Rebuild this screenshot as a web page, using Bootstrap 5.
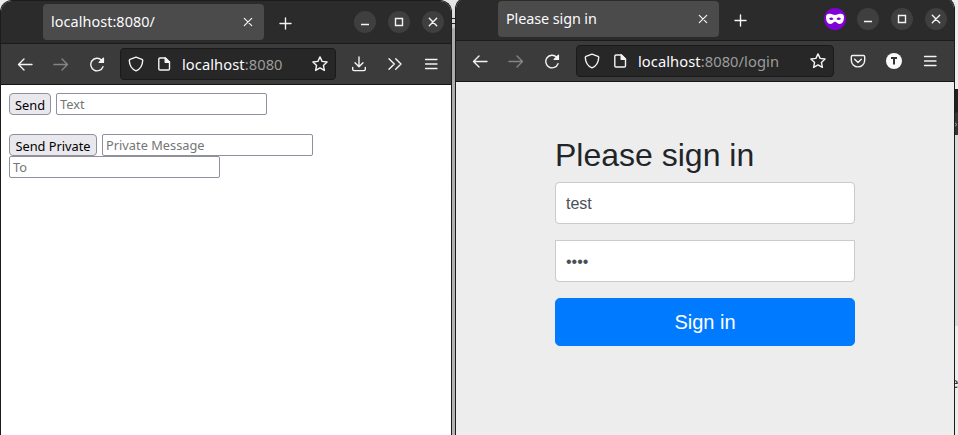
<!DOCTYPE html>
<html lang="en">
<head>
<meta charset="utf-8">
<meta name="viewport" content="width=device-width, initial-scale=1">
<title>Please sign in</title>
<link href="https://cdn.jsdelivr.net/npm/bootstrap@5.3.0/dist/css/bootstrap.min.css" rel="stylesheet">
<style>
body{width:958px;height:435px;overflow:hidden;background:#ededed;font-family:"Noto Sans","Open Sans",sans-serif}
.desktop{width:958px;height:435px}
.gutter{left:440px;top:0;width:25px;height:435px;background:linear-gradient(#e8e8e8 0,#d2d2d2 27px,#ababab 29px,#b4b4b4 100%)}
.peek{left:950px;width:8px}
.peek-a{top:89px;height:46px;background:linear-gradient(#202020 0 23px,#333 24px)}
.peek-b{top:135px;height:191px;background:#d8d8d8}
.peek-ch{left:950px;top:373px;font-size:15px;line-height:18px;color:#333}
.peek-x{left:954px;top:121px}
.gutter-mark{left:452px;top:18px;width:3px;height:6px;border-top:1px solid #222;border-bottom:1px solid #222}
.win{border:1px solid #1c1c1c;border-bottom:0;border-radius:12px 12px 0 0;overflow:hidden}
.win-a{left:0;top:0;width:452px;height:435px}
.win-b{left:455px;top:-3px;width:500px;height:438px}
.tabs-bar{height:43px;background:#2b2b2b;border-bottom:1px solid #1b1b1b;padding:0 7px 0 42px;color:#fbfbfe}
.tab-item{width:221px;height:36px;margin-bottom:1px;padding:0 11px 0 8px;background:#4b4b4b;border-radius:4px;font-size:14.4px}
.tab-text{letter-spacing:-.09px}
.tab-long{letter-spacing:.07px}
.tabs-bar svg,.tool-bar svg{display:block;fill:none;stroke:#f4f4f4;stroke-width:1.4;stroke-linecap:round;stroke-linejoin:round}
.tabs-bar .tab-item svg{stroke-width:1.2;margin-top:1px}
.tabs-bar .new-tab{margin-left:15px;margin-top:2px}
.ctl{width:22px;height:22px;border-radius:50%;background:#3f3f3f}
.ctl-gap{gap:12px}
.ctl.mask{background:#8000d7;margin-right:-1px}
.tool-bar{height:41px;background:#3b3b3b;border-bottom:1px solid #151515;padding-left:6px}
.tool{width:36px;height:36px}
.tool.off svg{stroke:#858585}
.url{height:32px;background:#272727;border:1px solid #1a1a1a;border-radius:4px;padding:0 7px;color:#fbfbfe;font-size:14.7px}
.url-a{margin:0 5px}
.url-b{margin:0 6px}
.tool-bar .url-doc{margin-left:12px;margin-right:10px}
.last-a{margin-right:2px}
.last-b{margin-right:6px}
.url-text{letter-spacing:.07px;margin-top:1px}
.url-text span{color:#9c9c9c}
.page-a{height:350px;background:#fff;padding:8px;font-size:13.3px;color:#000}
.page-a button{height:22px;padding:1px 0 0;border:1px solid #8f8f9d;border-radius:4px;background:#e9e9ed;font-size:12.8px;line-height:18px;color:#000}
.page-a input{width:211px;height:22px;padding:0 3px;border:1px solid #8f8f9d;border-radius:2px;font-size:12.8px;color:#000;display:block}
.page-a input::placeholder{color:#757575;opacity:1}
.row-gap{gap:5px}
.second-row{margin-top:19px}
.b-send{width:42px}.b-priv{width:88px}
.page-b{height:354px;background:#ededed;font-family:"Liberation Sans",Arial,sans-serif;padding-top:54px}
.signin{width:300px}
.signin h2{font-size:32px;line-height:38.4px;color:#212529;margin-bottom:8px;font-weight:500}
.signin .form-control{height:42px;padding:11px 10px 9px;border:1px solid #c8cacc;font-size:16px;line-height:20px;color:#495057;border-radius:4px;margin-bottom:16px}
.signin .pw{border-radius:0 0 4px 4px}
.signin .btn{height:48px;font-size:20px;line-height:30px;background:#007bff;border-color:#007bff;border-radius:4.8px;padding:8px 16px}
</style>
</head>
<body>
<svg class="d-none" aria-hidden="true">
<symbol id="back" viewBox="0 0 16 16"><path d="M15 8.500H1.500M7 3 1.500 8.500 7 14"/></symbol>
<symbol id="fwd" viewBox="0 0 16 16"><path d="M1 8.500h13.500M9 3l5.500 5.500L9 14"/></symbol>
<symbol id="reload" viewBox="0 0 16 16"><path d="M14 10.700A6.300 6.300 0 1 1 12.500 4L14 5.500"/><path d="M14.400 2.200v4.200h-4.200z" fill="#f4f4f4"/></symbol>
<symbol id="shield" viewBox="0 0 16 16"><path d="M8 1.100 14 3.400c.5.200.8.600.7 1.100-.2 5-2.400 8.600-6.700 10.400C3.700 13.100 1.500 9.500 1.300 4.500c0-.5.2-.9.7-1.100z"/></symbol>
<symbol id="doc" viewBox="0 0 16 16"><path d="M4 2h5.500l4 4v6.800c0 .8-.4 1.200-1.200 1.200H4c-.8 0-1.200-.4-1.200-1.200V3.200C2.800 2.400 3.200 2 4 2z"/><path d="M9.200 2v4.200h4.300z" fill="#f4f4f4"/></symbol>
<symbol id="star" viewBox="0 0 16 16"><path d="m8 .9 2.100 4.500 5 .6-3.700 3.400 1 5L8 11.900l-4.400 2.500 1-5L.9 6l5-.6z"/></symbol>
<symbol id="down" viewBox="0 0 16 16"><path d="M8 1v9.500M4 6.700l4 4 4-4M1.700 11.500v1.700c0 .9.500 1.400 1.400 1.400h9.800c.9 0 1.400-.5 1.400-1.400v-1.700"/></symbol>
<symbol id="more" viewBox="0 0 16 16"><path d="m2 2.700 5.300 5.300L2 13.300M8.700 2.700 14 8l-5.300 5.300"/></symbol>
<symbol id="menu" viewBox="0 0 16 16"><path d="M2.500 3.500h11.500M2.500 8h11.500M2.500 12.500h11.500" stroke-width="1.300"/></symbol>
<symbol id="pocket" viewBox="0 0 16 16"><path d="M2.600 2.500h10.800c.8 0 1.300.5 1.300 1.300v3.400a6.700 6.700 0 0 1-13.400 0V3.800c0-.8.500-1.300 1.300-1.300zM4.700 6.300 8 9.500l3.300-3.200"/></symbol>
<symbol id="cross" viewBox="0 0 10 10"><path d="m1.300 1.300 7.400 7.400M8.700 1.300 1.300 8.700"/></symbol>
<symbol id="plus" viewBox="0 0 13 13"><path d="M6.500 1v11M1 6.500h11"/></symbol>
<symbol id="min" viewBox="0 0 10 10"><path d="M1 7.500h8" stroke-linecap="butt"/></symbol>
<symbol id="max" viewBox="0 0 10 10"><path d="M1.500 1.500h7v7h-7z" stroke-linejoin="miter"/></symbol>
</svg>
<main class="desktop position-relative overflow-hidden">
<div class="gutter position-absolute"></div>
<div class="gutter-mark position-absolute"></div>
<div class="peek peek-a position-absolute"></div>
<svg class="peek-x position-absolute" width="4" height="7" viewBox="0 0 4 7"><path d="m0 1 3 2.500L0 6" fill="none" stroke="#999"/></svg>
<div class="peek peek-b position-absolute"></div>
<span class="peek-ch position-absolute">e</span>
<section class="win win-a position-absolute">
<div class="tabs-bar d-flex align-items-center">
<div class="tab-item d-flex align-items-center justify-content-between"><span class="tab-text tab-long">localhost:8080/</span><svg width="10" height="10"><use href="#cross"/></svg></div>
<svg class="new-tab" width="13" height="13"><use href="#plus"/></svg>
<div class="d-flex ctl-gap ms-auto">
<span class="ctl d-flex align-items-center justify-content-center"><svg width="10" height="10"><use href="#min"/></svg></span>
<span class="ctl d-flex align-items-center justify-content-center"><svg width="10" height="10"><use href="#max"/></svg></span>
<span class="ctl d-flex align-items-center justify-content-center"><svg width="10" height="10"><use href="#cross"/></svg></span>
</div>
</div>
<div class="tool-bar d-flex align-items-center">
<span class="tool d-flex align-items-center justify-content-center"><svg width="16" height="16"><use href="#back"/></svg></span>
<span class="tool off d-flex align-items-center justify-content-center"><svg width="16" height="16"><use href="#fwd"/></svg></span>
<span class="tool d-flex align-items-center justify-content-center"><svg width="16" height="16"><use href="#reload"/></svg></span>
<div class="url url-a d-flex align-items-center flex-grow-1"><svg width="16" height="16"><use href="#shield"/></svg><svg class="url-doc" width="16" height="16"><use href="#doc"/></svg><span class="url-text">localhost<span>:8080</span></span><svg class="ms-auto" width="16" height="16"><use href="#star"/></svg></div>
<span class="tool d-flex align-items-center justify-content-center"><svg width="16" height="16"><use href="#down"/></svg></span>
<span class="tool d-flex align-items-center justify-content-center"><svg width="16" height="16"><use href="#more"/></svg></span>
<span class="tool last-a d-flex align-items-center justify-content-center"><svg width="16" height="16"><use href="#menu"/></svg></span>
</div>
<div class="page-a">
<div class="d-flex row-gap mb-3"><button class="b-send">Send</button><input placeholder="Text"></div>
<div class="d-flex row-gap second-row"><button class="b-priv">Send Private</button><input placeholder="Private Message"></div>
<input placeholder="To">
</div>
</section>
<section class="win win-b position-absolute">
<div class="tabs-bar d-flex align-items-center">
<div class="tab-item d-flex align-items-center justify-content-between"><span class="tab-text">Please sign in</span><svg width="10" height="10"><use href="#cross"/></svg></div>
<svg class="new-tab" width="13" height="13"><use href="#plus"/></svg>
<div class="d-flex ctl-gap ms-auto">
<span class="ctl mask d-flex align-items-center justify-content-center"><svg width="18" height="12" viewBox="0 0 18 12"><path fill="#fff" stroke="none" fill-rule="evenodd" d="M0 4C0 1 2 .6 4 .8c2 .1 3.500 1.200 5 1.200S12 .9 14 .8c2-.2 4 .2 4 3.200 0 4-1.500 7-4.500 7C11 11 10.500 8.800 9 8.800S7 11 4.500 11C1.500 11 0 8 0 4zm3 1.700c1.300 1.600 3.200 1.600 4.600.3C6.500 4 4.300 3.900 3 5.700zm12 0c-1.300-1.800-3.500-1.700-4.600.3 1.400 1.300 3.300 1.300 4.600-.3z"/></svg></span>
<span class="ctl d-flex align-items-center justify-content-center"><svg width="10" height="10"><use href="#min"/></svg></span>
<span class="ctl d-flex align-items-center justify-content-center"><svg width="10" height="10"><use href="#max"/></svg></span>
<span class="ctl d-flex align-items-center justify-content-center"><svg width="10" height="10"><use href="#cross"/></svg></span>
</div>
</div>
<div class="tool-bar d-flex align-items-center">
<span class="tool d-flex align-items-center justify-content-center"><svg width="16" height="16"><use href="#back"/></svg></span>
<span class="tool off d-flex align-items-center justify-content-center"><svg width="16" height="16"><use href="#fwd"/></svg></span>
<span class="tool d-flex align-items-center justify-content-center"><svg width="16" height="16"><use href="#reload"/></svg></span>
<div class="url url-b d-flex align-items-center flex-grow-1"><svg width="16" height="16"><use href="#shield"/></svg><svg class="url-doc" width="16" height="16"><use href="#doc"/></svg><span class="url-text">localhost<span>:8080/login</span></span><svg class="ms-auto" width="16" height="16"><use href="#star"/></svg></div>
<span class="tool d-flex align-items-center justify-content-center"><svg width="16" height="16"><use href="#pocket"/></svg></span>
<span class="tool d-flex align-items-center justify-content-center"><svg width="16" height="16" viewBox="0 0 16 16"><circle cx="8" cy="8" r="8" fill="#fbfbfe" stroke="none"/><path d="M5 5h6M8 5v6.500" stroke="#333" stroke-width="2" stroke-linecap="butt"/></svg></span>
<span class="tool last-b d-flex align-items-center justify-content-center"><svg width="16" height="16"><use href="#menu"/></svg></span>
</div>
<div class="page-b">
<form class="signin mx-auto">
<h2>Please sign in</h2>
<input class="form-control" type="text" value="test">
<input class="form-control pw" type="password" value="test">
<button class="btn btn-primary w-100" type="button">Sign in</button>
</form>
</div>
</section>
</main>
<script src="https://cdn.jsdelivr.net/npm/bootstrap@5.3.0/dist/js/bootstrap.bundle.min.js"></script>
</body>
</html>
